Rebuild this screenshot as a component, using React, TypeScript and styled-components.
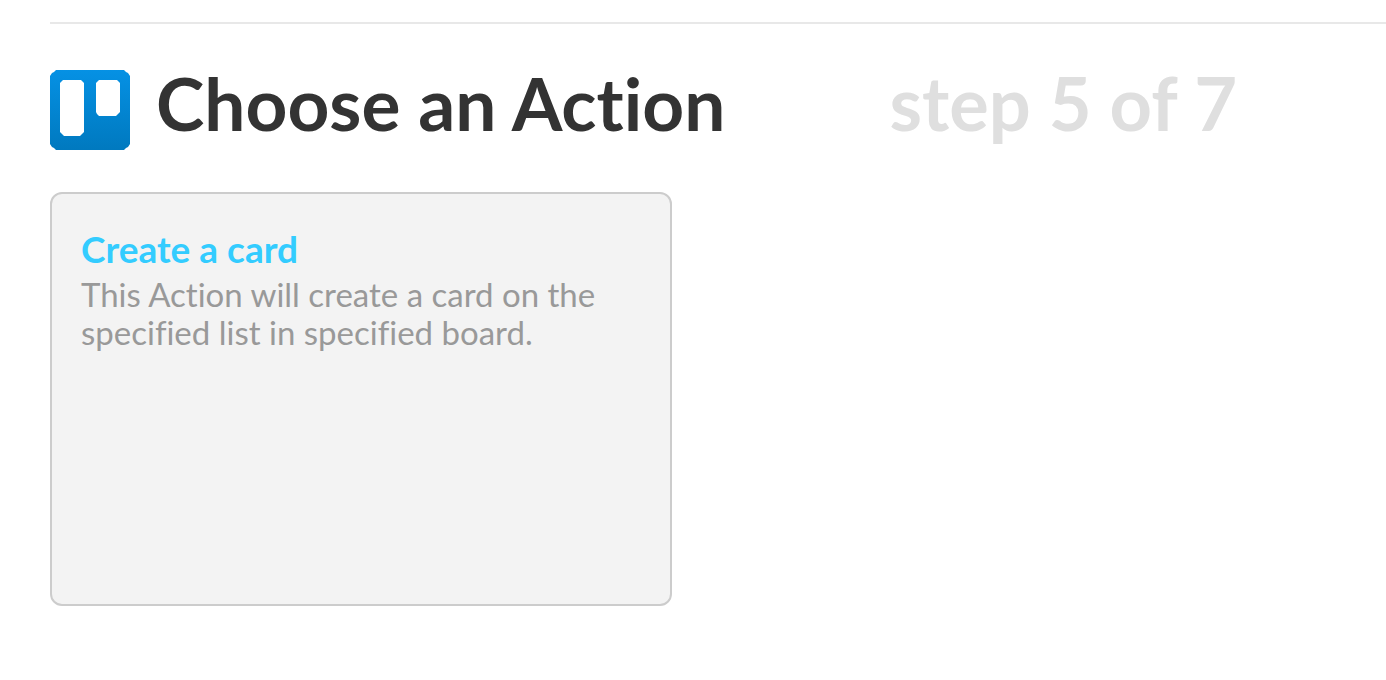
import React from "react";
import styled, { createGlobalStyle } from "styled-components";

const GlobalStyle = createGlobalStyle`
  *, *::before, *::after { box-sizing: border-box; }
  body {
    margin: 0;
    background: #fff;
    color: #333;
    font-family: Lato, sans-serif;
    font-variant-ligatures: none;
  }
`;

const Page = styled.main`
  padding: 22px 0 48px 50px;
`;

const Divider = styled.hr`
  height: 2px;
  margin: 0;
  border: 0;
  background: #e8e8e8;
`;

const Header = styled.header`
  display: flex;
  align-items: flex-start;
  padding: 46px 0 42px;
`;

const Logo = styled.svg`
  flex: none;
  width: 80px;
  height: 80px;
  margin-right: 26px;
`;

const Title = styled.h1`
  margin: 0;
  font-size: 73px;
  line-height: 66px;
  font-weight: 700;
`;

const Step = styled.p`
  margin: 0 0 0 164px;
  color: #dfdfdf;
  font-size: 74px;
  line-height: 66px;
  font-weight: 700;
`;

const ActionCard = styled.a`
  display: block;
  width: 100%;
  max-width: 622px;
  min-height: 414px;
  padding: 30px 29px;
  border: 2px solid #ccc;
  border-radius: 12px;
  background: #f3f3f3;
  text-decoration: none;
`;

const CardTitle = styled.h2`
  margin: 0 0 1px;
  color: #3cf;
  font-size: 37px;
  line-height: 50px;
  font-weight: 700;
`;

const CardText = styled.p`
  margin: 0;
  color: #999;
  font-size: 33px;
  line-height: 38px;
`;

function TrelloLogo() {
  return (
    <Logo viewBox="0 0 80 80" role="img" aria-label="Trello">
      <defs>
        <linearGradient id="board" x1="0" y1="0" x2="0" y2="1">
          <stop offset="0" stopColor="#0591e4" />
          <stop offset="1" stopColor="#0079bf" />
        </linearGradient>
      </defs>
      <path
        d="M6 0H74L76 2L78 3L80 6V74L78 77L76 78L74 80H6L4 78L2 77L0 74V6L2 3L4 2Z"
        fill="url(#board)"
      />
      <path
        d="M13 10H31L34 13V62L32 64L30 66H14L12 64L10 62V13Z"
        fill="#fff"
      />
      <path
        d="M49 10H67L70 13V42L68 44L66 46H49L47 44L46 42V13Z"
        fill="#fff"
      />
    </Logo>
  );
}

export default function App() {
  return (
    <>
      <GlobalStyle />
      <Page>
        <Divider />
        <Header>
          <TrelloLogo />
          <Title>Choose an Action</Title>
          <Step>step 5 of 7</Step>
        </Header>
        <ActionCard href="#create-card">
          <CardTitle>Create a card</CardTitle>
          <CardText>
            This Action will create a card on the specified list in specified
            board.
          </CardText>
        </ActionCard>
      </Page>
    </>
  );
}
